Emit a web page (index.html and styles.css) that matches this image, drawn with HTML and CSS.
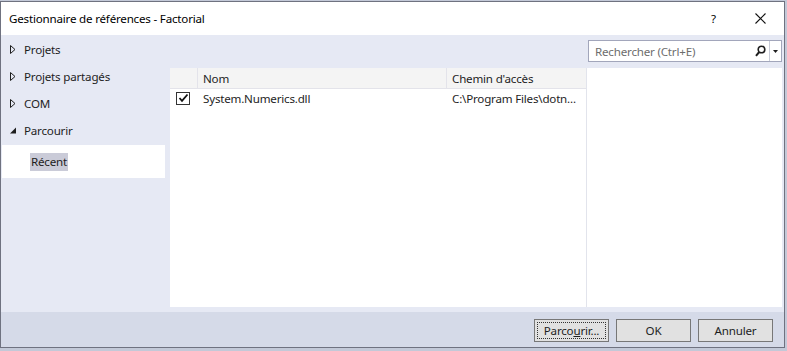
FILE: index.html
```html
<!DOCTYPE html>
<html lang="fr">
<head>
<meta charset="utf-8">
<title>Gestionnaire de références - Factorial</title>
<link rel="stylesheet" href="styles.css">
</head>
<body>
<div class="window">
  <div class="titlebar">
    <span class="title">Gestionnaire de références - Factorial</span>
    <span class="help">?</span>
    <span class="close">
      <svg width="11" height="11" viewBox="0 0 11 11"><path d="M0.5 0.5 L10.5 10.5 M10.5 0.5 L0.5 10.5" stroke="#111" stroke-width="1.1" fill="none"/></svg>
    </span>
  </div>
  <div class="main">
    <nav class="nav">
      <div class="nav-item"><svg class="tri" width="6" height="9" viewBox="0 0 6 9"><path d="M0.5 0.5 L5 4.5 L0.5 8.5 Z" fill="none" stroke="#1e1e1e" stroke-width="1"/></svg><span>Projets</span></div>
      <div class="nav-item"><svg class="tri" width="6" height="9" viewBox="0 0 6 9"><path d="M0.5 0.5 L5 4.5 L0.5 8.5 Z" fill="none" stroke="#1e1e1e" stroke-width="1"/></svg><span>Projets partagés</span></div>
      <div class="nav-item"><svg class="tri" width="6" height="9" viewBox="0 0 6 9"><path d="M0.5 0.5 L5 4.5 L0.5 8.5 Z" fill="none" stroke="#1e1e1e" stroke-width="1"/></svg><span>COM</span></div>
      <div class="nav-item"><svg class="tri" width="6" height="9" viewBox="0 0 6 9"><path d="M6 1.5 L6 7.5 L0 7.5 Z" fill="#1e1e1e"/></svg><span>Parcourir</span></div>
      <div class="nav-sub"><span class="sel">Récent</span></div>
    </nav>
    <div class="content">
      <div class="searchrow">
        <div class="search">
          <span class="placeholder">Rechercher (Ctrl+E)</span>
          <svg class="mag" width="11" height="12" viewBox="0 0 11 12"><circle cx="6.5" cy="4.5" r="3.3" fill="none" stroke="#1e1e1e" stroke-width="1.6"/><path d="M4.2 7 L1 10.8" stroke="#1e1e1e" stroke-width="2"/></svg>
          <span class="drop"><svg width="5" height="3" viewBox="0 0 5 3"><path d="M0 0 H5 L2.5 3 Z" fill="#1e1e1e"/></svg></span>
        </div>
      </div>
      <div class="panes">
        <div class="list">
          <div class="thead">
            <div class="c-check"></div>
            <div class="c-name">Nom</div>
            <div class="c-path">Chemin d'accès</div>
          </div>
          <div class="trow">
            <div class="c-check"><span class="cb"><svg width="11" height="10" viewBox="0 0 11 10"><path d="M1.5 5 L4 7.8 L9.5 1.5" fill="none" stroke="#111" stroke-width="1.8"/></svg></span></div>
            <div class="c-name">System.Numerics.dll</div>
            <div class="c-path">C:\Program Files\dotn...</div>
          </div>
        </div>
        <div class="details"></div>
      </div>
    </div>
  </div>
  <div class="footer">
    <button class="btn focus"><span class="focusrect">Parco<u>u</u>rir...</span></button>
    <button class="btn">OK</button>
    <button class="btn">Annuler</button>
  </div>
</div>
</body>
</html>
```

FILE: styles.css
```css
* { box-sizing: border-box; }
html, body { margin: 0; padding: 0; }
body {
  background: #c3c9d8;
  font-family: "Noto Sans", "Open Sans", sans-serif;
  font-size: 11.6px;
  letter-spacing: -0.2px;
  color: #1e1e1e;
  height: 351px;
  overflow: hidden;
  padding-top: 1px;
}
.window {
  width: 785px;
  height: 347px;
  border: 1px solid #6f7280;
  background: #e6e9f4;
  display: flex;
  flex-direction: column;
}
.titlebar {
  height: 33px;
  background: #ffffff;
  display: flex;
  align-items: center;
  padding-left: 8px;
  flex: none;
}
.title { flex: 1; color: #000; }
.help { width: 20px; color: #000; margin-right: 24px; }
.close { width: 11px; height: 11px; margin-right: 18px; display: flex; }
.main {
  flex: 1;
  display: flex;
  background: #e6e9f4;
}
.nav {
  width: 169px;
  flex: none;
  padding: 1px 5px 0 1px;
}
.nav-item {
  height: 27px;
  display: flex;
  align-items: center;
  padding-left: 8px;
  color: #1e1e1e;
}
.nav-item .tri { margin-right: 8px; flex: none; }
.nav-sub {
  height: 33px;
  background: #ffffff;
  display: flex;
  align-items: center;
  padding-left: 28px;
  margin-top: 1px;
}
.sel {
  background: #cacbd8;
  padding: 1px 1px 2px 1px;
}
.content {
  flex: 1;
  display: flex;
  flex-direction: column;
  padding: 0 2px 5px 0;
}
.searchrow {
  height: 33px;
  display: flex;
  justify-content: flex-end;
  align-items: flex-start;
  padding-top: 5px;
}
.search {
  width: 194px;
  height: 22px;
  border: 1px solid #a2a6bb;
  background: #ffffff;
  display: flex;
  align-items: center;
}
.placeholder { flex: 1; color: #6d6d6d; padding-left: 6px; }
.mag { margin-right: 3px; }
.drop {
  width: 12px;
  height: 100%;
  border-left: 1px solid #c8ccd8;
  display: flex;
  align-items: center;
  justify-content: center;
}
.panes {
  flex: 1;
  display: flex;
  background: #ffffff;
}
.list {
  width: 417px;
  flex: none;
  border-right: 1px solid #e2e4ec;
}
.details { flex: 1; }
.thead, .trow { display: flex; }
.thead {
  height: 21px;
  background: #f4f4f4;
  border-bottom: 1px solid #e3e3ea;
  align-items: center;
}
.thead > div { height: 100%; display: flex; align-items: center; }
.c-check { width: 28px; flex: none; }
.c-name { width: 249px; flex: none; padding-left: 5px; }
.c-path { flex: 1; padding-left: 5px; white-space: nowrap; overflow: hidden; }
.thead .c-check { border-right: 1px solid #e3e3ea; }
.thead .c-name { border-right: 1px solid #e3e3ea; }
.trow { height: 18px; align-items: center; }
.cb {
  display: flex;
  align-items: center;
  justify-content: center;
  width: 14px;
  height: 13px;
  margin-left: 6px;
  border: 1px solid #333;
  background: #fff;
}
.footer {
  height: 35px;
  flex: none;
  background: #d5dae8;
  display: flex;
  justify-content: flex-end;
  align-items: center;
  gap: 7px;
  padding-right: 11px;
  padding-top: 1px;
}
.btn {
  width: 75px;
  height: 23px;
  border: 1px solid #777;
  background: #e1e1e1;
  font-family: inherit;
  font-size: 11.6px;
  letter-spacing: -0.2px;
  color: #1e1e1e;
  padding: 0;
}
.btn.focus { padding: 2px; }
.focusrect {
  display: flex;
  align-items: center;
  justify-content: center;
  height: 100%;
  border: 1px dotted #333;
}
u { text-decoration: underline; }
```
